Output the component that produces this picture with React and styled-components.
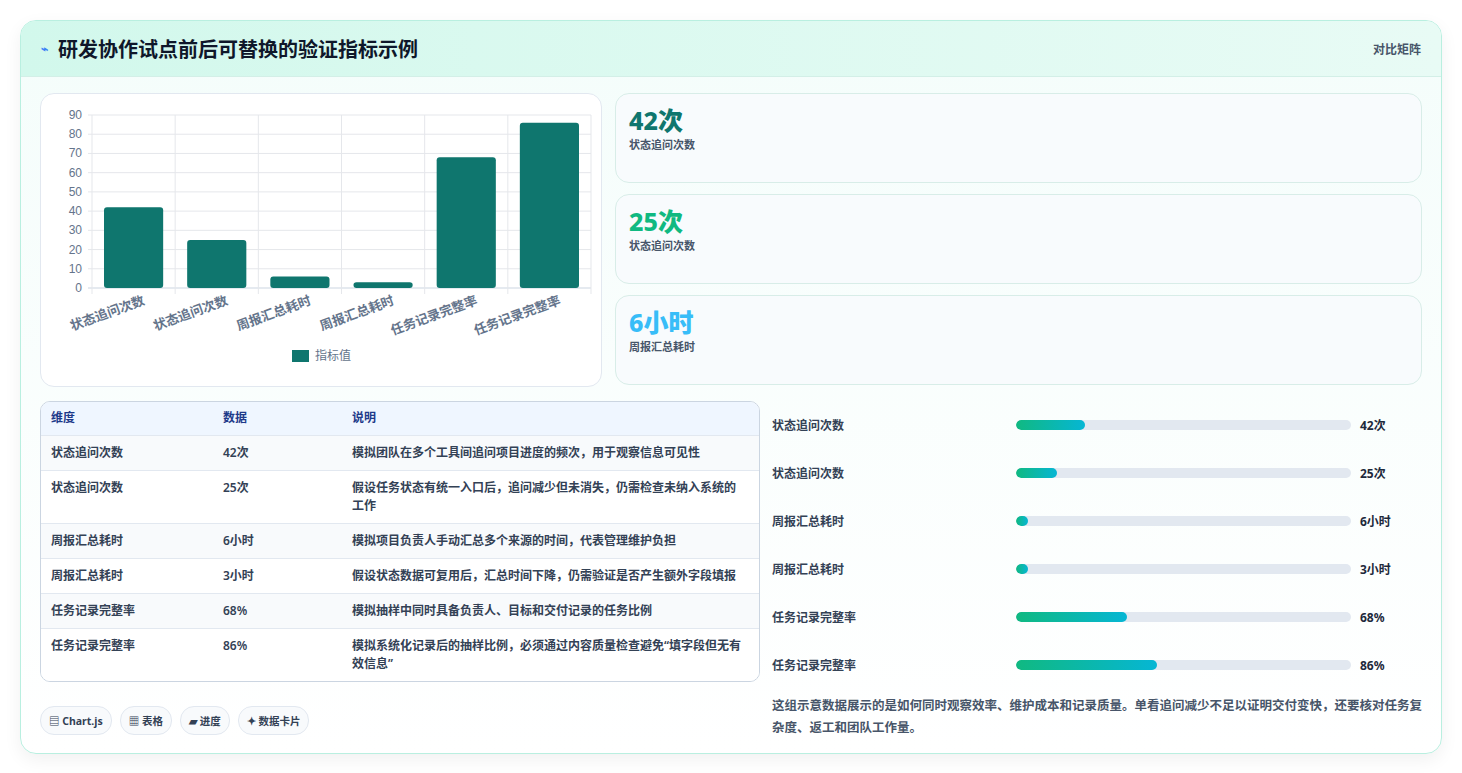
import React from "react";
import styled, { createGlobalStyle } from "styled-components";

const G = createGlobalStyle`
  body{margin:0;background:#f1f3f4;font-family:"Noto Sans","Noto Sans CJK SC",sans-serif;color:#1e293b;}
`;
const Page = styled.div`padding:20px 20px 22px 20px;background:#fff;`;
const Card = styled.div`
  border:1px solid #b9efe0;border-radius:16px;overflow:hidden;background:linear-gradient(180deg,#f4fdfb,#fff);
  box-shadow:0 6px 18px rgba(0,0,0,0.06);
`;
const Header = styled.div`
  height:55px;display:flex;align-items:center;justify-content:space-between;padding:0 20px;
  background:linear-gradient(90deg,#d2f8ec,#e8fbf5);border-bottom:1px solid #d3efe7;
`;
const Title = styled.h1`margin:0;font-size:20px;font-weight:700;color:#0f172a;display:flex;align-items:center;gap:10px;`;
const Tag = styled.span`font-size:12px;color:#475569;font-weight:600;`;
const Body = styled.div`padding:16px 19px 14px 19px;display:flex;flex-direction:column;gap:14px;`;
const Row = styled.div`display:grid;grid-template-columns:${p => p.cols};gap:${p => p.gap}px;`;
const Panel = styled.div`background:#fff;border:1px solid #e2e8f0;border-radius:14px;height:292px;`;
const Stats = styled.div`display:flex;flex-direction:column;gap:11px;`;
const Stat = styled.div`height:90px;box-sizing:border-box;border:1px solid #d8ede8;border-radius:14px;background:#f8fbfd;padding:10px 13px;`;
const Big = styled.div`font-size:25px;font-weight:800;color:${p => p.c};line-height:32px;`;
const Small = styled.div`font-size:11px;color:#475569;font-weight:600;`;
const Table = styled.div`border:1px solid #cbd5e1;border-radius:10px;overflow:hidden;background:#fff;font-size:12px;font-weight:600;`;
const TR = styled.div`display:grid;grid-template-columns:172px 129px 1fr;padding:${p => p.h ? "7px 10px 8px" : "8px 12px 8px 10px"};
  background:${p => p.h ? "#eff6ff" : p.odd ? "#f8fafc" : "#fff"};border-bottom:1px solid #e2e8f0;line-height:18px;
  color:${p => p.h ? "#1e3a8a" : "#334155"};&:last-child{border-bottom:none;}`;
const Right = styled.div`display:flex;flex-direction:column;padding-left:12px;`;
const BarRow = styled.div`height:48px;display:grid;grid-template-columns:235px 335px auto;gap:9px;align-items:center;font-size:12px;font-weight:600;color:#334155;`;
const Track = styled.div`height:10px;border-radius:5px;background:#e2e8f0;overflow:hidden;`;
const Fill = styled.div`height:100%;border-radius:5px;background:linear-gradient(90deg,#10b981,#06b6d4);`;
const Val = styled.span`font-weight:700;color:#1e293b;`;
const Note = styled.p`margin:6px 0 0;font-size:12.5px;line-height:22px;color:#475569;font-weight:600;`;
const Chips = styled.div`display:flex;gap:8px;align-items:flex-end;padding-top:24px;`;
const Chip = styled.span`font-size:10.5px;font-weight:700;color:#334155;border:1px solid #e2e8f0;background:#f8fafc;border-radius:14px;padding:6px 8px;`;

const vals = [42, 25, 6, 3, 68, 86];
const names = ["状态追问次数", "状态追问次数", "周报汇总耗时", "周报汇总耗时", "任务记录完整率", "任务记录完整率"];
const units = ["42次", "25次", "6小时", "3小时", "68%", "86%"];
const desc = ["模拟团队在多个工具间追问项目进度的频次，用于观察信息可见性",
  "假设任务状态有统一入口后，追问减少但未消失，仍需检查未纳入系统的工作",
  "模拟项目负责人手动汇总多个来源的时间，代表管理维护负担",
  "假设状态数据可复用后，汇总时间下降，仍需验证是否产生额外字段填报",
  "模拟抽样中同时具备负责人、目标和交付记录的任务比例",
  "模拟系统化记录后的抽样比例，必须通过内容质量检查避免“填字段但无有效信息”"];

function Chart() {
  const L = 51, R = 550, T = 21, B = 194, cw = (R - L) / 6, per = (B - T) / 90;
  return (
    <svg width="561" height="292" style={{ display: "block" }}>
      {Array.from({ length: 10 }, (_, i) => (
        <g key={i}>
          <line x1={L - 4} x2={R} y1={B - i * 10 * per} y2={B - i * 10 * per} stroke={i ? "#e5e7eb" : "#cbd5e1"} />
          <text x={L - 10} y={B - i * 10 * per + 4} fontSize="12" fill="#64748b" textAnchor="end" fontFamily="Liberation Sans">{i * 10}</text>
        </g>))}
      {Array.from({ length: 7 }, (_, i) => <line key={i} x1={L + i * cw} x2={L + i * cw} y1={T} y2={B + 6} stroke="#e5e7eb" />)}
      {vals.map((v, i) => (
        <rect key={i} x={L + i * cw + 12} width={cw - 24} y={B - v * per} height={v * per} rx="3" fill="#0f766e" />))}
      {names.map((n, i) => (
        <text key={i} transform={`translate(${L + i * cw + cw / 2 + 12},${B + 16}) rotate(-20)`} textAnchor="end" fontSize="13" fontWeight="700" fill="#64748b">{n}</text>))}
      <rect x="251" y="256" width="17" height="12" fill="#0f766e" />
      <text x="274" y="266" fontSize="12" fill="#64748b">指标值</text>
    </svg>);
}

export default function App() {
  return (<Page><G />
    <Card>
      <Header>
        <Title><span style={{ color: "#3b82f6", fontSize: 12 }}>⌁</span>研发协作试点前后可替换的验证指标示例</Title>
        <Tag>对比矩阵</Tag>
      </Header>
      <Body>
        <Row cols="562px 1fr" gap={13}>
          <Panel><Chart /></Panel>
          <Stats>
            <Stat><Big c="#0f766e">42次</Big><Small>状态追问次数</Small></Stat>
            <Stat><Big c="#10b981">25次</Big><Small>状态追问次数</Small></Stat>
            <Stat><Big c="#38bdf8">6小时</Big><Small>周报汇总耗时</Small></Stat>
          </Stats>
        </Row>
        <Row cols="720px 1fr" gap={0}>
          <div>
            <Table>
              <TR h><span>维度</span><span>数据</span><span>说明</span></TR>
              {names.map((n, i) => <TR key={i} odd={i % 2 === 0}><span>{n}</span><span>{units[i]}</span><span>{desc[i]}</span></TR>)}
            </Table>
            <Chips><Chip>▤ Chart.js</Chip><Chip>▦ 表格</Chip><Chip>▰ 进度</Chip><Chip>✦ 数据卡片</Chip></Chips>
          </div>
          <Right>
            {names.map((n, i) => (
              <BarRow key={i}><span>{n}</span><Track><Fill style={{ width: `${[20.5, 12.2, 3.5, 3.5, 33, 42][i]}%` }} /></Track><Val>{units[i]}</Val></BarRow>))}
            <Note>这组示意数据展示的是如何同时观察效率、维护成本和记录质量。单看追问减少不足以证明交付变快，还要核对任务复杂度、返工和团队工作量。</Note>
          </Right>
        </Row>
      </Body>
    </Card>
  </Page>);
}
